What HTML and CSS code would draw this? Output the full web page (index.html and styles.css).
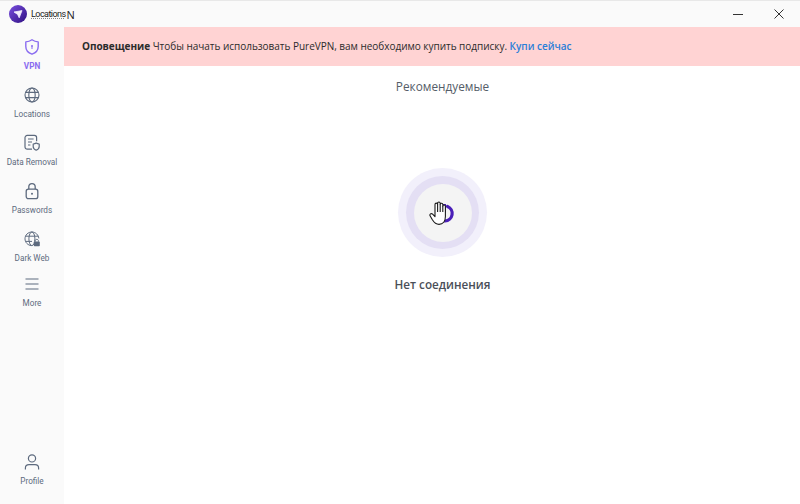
FILE: index.html

```html
<!DOCTYPE html>
<html lang="en">
<head>
    <meta charset="UTF-8">
    <meta name="viewport" content="width=device-width, initial-scale=1.0">
    <title>PureVPN</title>
    <link rel="stylesheet" href="styles.css">
</head>
<body>
    <div class="app">
        <div class="titlebar">
            <div class="brand">
                <svg class="logo" width="18" height="18" viewBox="0 0 18 18">
                    <defs>
                        <linearGradient id="logoFill" x1="0" y1="0" x2="1" y2="1">
                            <stop offset="0" stop-color="#7a4fe0"/>
                            <stop offset="1" stop-color="#2e0f80"/>
                        </linearGradient>
                    </defs>
                    <circle cx="9" cy="9" r="9" fill="url(#logoFill)"/>
                    <path d="M5 7 L13 5.6 L10.2 12.8 L8.6 9.4 Z" fill="#f3eefc" stroke="#f3eefc" stroke-width="0.8" stroke-linejoin="round"/>
                </svg>
                <span class="brand-name">Locations</span><span class="brand-tail">N</span>
            </div>
            <div class="window-controls">
                <svg width="10" height="10" viewBox="0 0 10 10"><path d="M0 5.5H10" stroke="#333" stroke-width="1"/></svg>
                <svg width="10" height="10" viewBox="0 0 10 10"><path d="M0.5 0.5L9.5 9.5M9.5 0.5L0.5 9.5" stroke="#333" stroke-width="1" fill="none"/></svg>
            </div>
        </div>
        <div class="body">
            <nav class="sidebar">
                <a class="nav-item active">
                    <svg width="18" height="18" viewBox="0 0 18 18" fill="none" stroke="#8a6cf0" stroke-width="1.4">
                        <path d="M9 1.8 C11 3.2 13 3.8 15.2 3.9 V8.6 C15.2 12.4 12.6 15 9 16.2 C5.4 15 2.8 12.4 2.8 8.6 V3.9 C5 3.8 7 3.2 9 1.8 Z" stroke-linejoin="round"/>
                        <circle cx="9" cy="8" r="1" fill="#8a6cf0" stroke="none"/>
                        <path d="M9 8.5V11" stroke-width="1"/>
                    </svg>
                    <span>VPN</span>
                </a>
                <a class="nav-item">
                    <svg width="18" height="18" viewBox="0 0 18 18" fill="none" stroke="#5d6a7e" stroke-width="1.1">
                        <circle cx="9" cy="9" r="7"/>
                        <ellipse cx="9" cy="9" rx="3.2" ry="7"/>
                        <path d="M2.6 6.4H15.4M2.6 11.6H15.4"/>
                    </svg>
                    <span>Locations</span>
                </a>
                <a class="nav-item">
                    <svg width="18" height="18" viewBox="0 0 18 18" fill="none" stroke="#5d6a7e" stroke-width="1.2">
                        <path d="M9 15.2H4.2C3 15.2 2 14.2 2 13V3.6C2 2.4 3 1.4 4.2 1.4H11.4C12.6 1.4 13.6 2.4 13.6 3.6V7.2" stroke-linejoin="round"/>
                        <path d="M5 5H10.6M5 8H9M5 11H7.4"/>
                        <path d="M13.2 9C14 9.6 15 9.9 16.2 10V12.4C16.2 14.2 14.9 15.5 13.2 16.2C11.5 15.5 10.2 14.2 10.2 12.4V10C11.4 9.9 12.4 9.6 13.2 9Z" stroke-linejoin="round"/>
                    </svg>
                    <span>Data Removal</span>
                </a>
                <a class="nav-item">
                    <svg width="18" height="18" viewBox="0 0 18 18" fill="none" stroke="#5d6a7e" stroke-width="1.3">
                        <rect x="3.2" y="7.2" width="11.6" height="9.4" rx="2.2"/>
                        <path d="M5.8 7.2V4.8C5.8 3 7.2 1.6 9 1.6C10.8 1.6 12.2 3 12.2 4.8V7.2"/>
                        <circle cx="9" cy="11.8" r="1" fill="#5d6a7e" stroke="none"/>
                    </svg>
                    <span>Passwords</span>
                </a>
                <a class="nav-item">
                    <svg width="18" height="18" viewBox="0 0 18 18" fill="none" stroke="#5d6a7e" stroke-width="1">
                        <path d="M8.4 15.6C4.8 15.3 2 12.4 2 8.8C2 5 5.1 2 8.9 2C12.5 2 15.5 4.8 15.8 8.4"/>
                        <ellipse cx="8.9" cy="8.8" rx="3" ry="6.8"/>
                        <path d="M2.6 6.2H15.2M2.6 11.4H9"/>
                        <rect x="10.8" y="11.6" width="6" height="4.6" rx="0.8" fill="#5d6a7e" stroke="none"/>
                        <path d="M12.2 11.6V10.6C12.2 9.9 12.9 9.4 13.8 9.4C14.7 9.4 15.4 9.9 15.4 10.6V11.6"/>
                    </svg>
                    <span>Dark Web</span>
                </a>
                <a class="nav-item nav-more">
                    <svg width="18" height="18" viewBox="0 0 18 18" fill="none" stroke="#5d6a7e" stroke-width="1.1">
                        <path d="M2.5 4H15.5M2.5 9H15.5M2.5 14H15.5"/>
                    </svg>
                    <span>More</span>
                </a>
                <a class="nav-item nav-profile">
                    <svg width="18" height="18" viewBox="0 0 18 18" fill="none" stroke="#5d6a7e" stroke-width="1.2">
                        <circle cx="9" cy="5.4" r="3.6"/>
                        <path d="M2.4 16.4V15C2.4 13 4 11.6 6 11.6H12C14 11.6 15.6 13 15.6 15V16.4"/>
                    </svg>
                    <span>Profile</span>
                </a>
            </nav>
            <main class="main">
                <div class="alert">
                    <b>Оповещение</b> Чтобы начать использовать PureVPN, вам необходимо купить подписку. <a class="alert-link">Купи сейчас</a>
                </div>
                <div class="content">
                    <div class="recommended">Рекомендуемые</div>
                    <div class="ring-outer">
                        <div class="ring-mid">
                            <div class="ring-inner">
                                <svg class="power" width="22" height="22" viewBox="0 0 22 22" fill="none">
                                    <path d="M12.5 3.4A7.6 7.6 0 0 1 10 18" stroke="#4a1fb8" stroke-width="3.2" stroke-linecap="round"/>
                                    <path d="M9.5 1V9" stroke="#4a1fb8" stroke-width="3"/>
                                </svg>
                                <svg class="cursor" width="20" height="25" viewBox="0 0 20 25">
                                    <path d="M6 13V3.6C6 1.6 8.6 1.6 8.6 3.6V2.4C8.6 .6 11.2 .6 11.2 2.4V3.4C11.2 1.8 13.8 1.8 13.8 3.6V5C13.8 3.6 16.4 3.6 16.4 5.2V15.6C16.4 20 14 23.4 10 23.4C6.4 23.4 5 21.4 3.4 18.8L1.2 15C.2 13.2 2.2 11.8 3.6 13.2L6 15.6Z" fill="#fff" stroke="#1a1a1a" stroke-width="1.1" stroke-linejoin="round"/>
                                    <path d="M8.6 3.6V11M11.2 3.4V11M13.8 5V11" stroke="#1a1a1a" stroke-width="1.1"/>
                                </svg>
                            </div>
                        </div>
                    </div>
                    <div class="status">Нет соединения</div>
                </div>
            </main>
        </div>
    </div>
</body>
</html>
```

FILE: styles.css

```css
* {
    margin: 0;
    padding: 0;
    box-sizing: border-box;
}

body {
    font-family: "Open Sans", "Noto Sans", sans-serif;
    background-color: #fff;
    overflow: hidden;
}

.app {
    display: flex;
    flex-direction: column;
    width: 800px;
    height: 504px;
}

.titlebar {
    display: flex;
    align-items: center;
    justify-content: space-between;
    height: 27px;
    background-color: #fafafa;
    border-top: 1px solid #e8e8e8;
}

.brand {
    display: flex;
    align-items: center;
    padding-left: 9px;
    color: #222;
}

.logo {
    margin-right: 4px;
}

.brand-name {
    font-family: Roboto, sans-serif;
    font-size: 9px;
    letter-spacing: -0.55px;
    text-decoration: underline dotted #888;
}

.brand-tail {
    font-size: 11px;
    margin-left: 1px;
}

.window-controls {
    display: flex;
    gap: 31px;
    padding-right: 16px;
}

.body {
    display: flex;
    flex: 1;
}

.sidebar {
    display: flex;
    flex-direction: column;
    width: 64px;
    background-color: #fafafa;
}

.nav-item {
    display: flex;
    flex-direction: column;
    align-items: center;
    height: 48px;
    padding-top: 11px;
    font-family: Roboto, sans-serif;
    font-size: 8.2px;
    line-height: 12px;
    color: #5d6a7e;
    white-space: nowrap;
}

.nav-item svg {
    margin-bottom: 4px;
}

.nav-item.active {
    color: #8a6cf0;
    font-weight: 700;
}

.nav-more {
    height: 45px;
    padding-top: 8px;
}

.nav-profile {
    margin-top: auto;
    padding-top: 0;
    height: 34px;
    margin-bottom: 17px;
}

.main {
    display: flex;
    flex-direction: column;
    flex: 1;
}

.alert {
    height: 39px;
    padding: 0 18px;
    background-color: #ffd3d3;
    font-size: 10px;
    letter-spacing: -0.025px;
    line-height: 39px;
    color: #2b2b2b;
}

.alert b {
    font-weight: 700;
}

.alert-link {
    color: #2b7fd8;
    font-weight: 600;
}

.content {
    display: flex;
    flex-direction: column;
    align-items: center;
    padding-left: 21px;
}

.recommended {
    margin-top: 11px;
    font-size: 11.8px;
    line-height: 18px;
    color: #555d68;
}

.ring-outer,
.ring-mid,
.ring-inner {
    display: flex;
    align-items: center;
    justify-content: center;
    border-radius: 50%;
}

.ring-outer {
    width: 89px;
    height: 89px;
    margin-top: 73px;
    background-color: #f2f0fb;
}

.ring-mid {
    width: 73px;
    height: 73px;
    background-color: #e4dff4;
}

.ring-inner {
    position: relative;
    width: 58px;
    height: 58px;
    background-color: #f4f4f4;
}

.power {
    position: absolute;
    left: 21px;
    top: 19px;
}

.cursor {
    position: absolute;
    left: 15px;
    top: 17px;
}

.status {
    margin-top: 18px;
    font-size: 11.7px;
    line-height: 18px;
    font-weight: 600;
    color: #4a4f58;
}
```
